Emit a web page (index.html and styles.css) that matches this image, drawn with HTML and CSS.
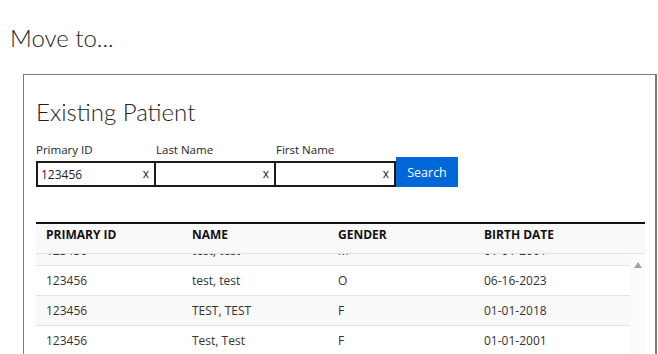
FILE: index.html
```html
<!DOCTYPE html>
<html lang="en">
<head>
  <meta charset="UTF-8" />
  <meta name="viewport" content="width=device-width, initial-scale=1.0"/>
  <title>Move to...</title>
  <link rel="stylesheet" href="styles.css">
</head>
<body>
  <h1 class="page-title">Move to...</h1>
  <div class="panel">
    <h2 class="panel-title">Existing Patient</h2>
    <form class="search" onsubmit="return false">
      <label class="field">
        <span class="field-label">Primary ID</span>
        <span class="field-box">
          <input type="text" value="123456">
          <span class="clear">x</span>
        </span>
      </label>
      <label class="field">
        <span class="field-label">Last Name</span>
        <span class="field-box">
          <input type="text" value="">
          <span class="clear">x</span>
        </span>
      </label>
      <label class="field">
        <span class="field-label">First Name</span>
        <span class="field-box">
          <input type="text" value="">
          <span class="clear">x</span>
        </span>
      </label>
      <button class="search-btn" type="submit">Search</button>
    </form>

    <div class="results">
      <div class="row head">
        <div>PRIMARY ID</div>
        <div>NAME</div>
        <div>GENDER</div>
        <div>BIRTH DATE</div>
      </div>
      <div class="body">
        <div class="rows">
          <div class="row alt">
            <div>123456</div><div>test, test</div><div>M</div><div>01-01-2001</div>
          </div>
          <div class="row">
            <div>123456</div><div>test, test</div><div>O</div><div>06-16-2023</div>
          </div>
          <div class="row alt">
            <div>123456</div><div>TEST, TEST</div><div>F</div><div>01-01-2018</div>
          </div>
          <div class="row">
            <div>123456</div><div>Test, Test</div><div>F</div><div>01-01-2001</div>
          </div>
        </div>
        <div class="scrollbar"><span class="arrow"></span></div>
      </div>
    </div>
  </div>
</body>
</html>
```

FILE: styles.css
```css
body {
  margin: 0;
  height: 100vh;
  overflow: hidden;
  font-family: "Open Sans", "Noto Sans", sans-serif;
  color: #1e1e1e;
  background-color: #fff;
}
.page-title {
  margin: 22px 0 20px 10px;
  font-family: Lato, "Open Sans", sans-serif;
  font-size: 24px;
  font-weight: 300;
  line-height: 32px;
}
.panel {
  margin: 0 1px 0 23px;
  padding: 21px 10px 0 12px;
  border: 1px solid #7a7a7a;
  border-right-width: 2px;
  height: 400px;
}
.panel-title {
  margin: 0 0 14px;
  font-family: Lato, "Open Sans", sans-serif;
  font-size: 24px;
  font-weight: 300;
  line-height: 32px;
}
.search {
  display: flex;
  align-items: flex-end;
}
.field {
  display: flex;
  flex-direction: column;
}
.field-label {
  font-size: 11.5px;
  line-height: 16px;
  margin-bottom: 3px;
}
.field-box {
  display: flex;
  align-items: center;
  width: 116px;
  height: 22px;
  border: 2px solid #1a1a1a;
  border-left: 0;
}
.field:first-child .field-box {
  width: 116px;
  border-left: 2px solid #1a1a1a;
}
.field + .field .field-box {
  width: 118px;
}
.field input {
  flex: 1;
  min-width: 0;
  border: 0;
  outline: 0;
  padding: 0 0 0 3px;
  font-family: inherit;
  font-size: 12px;
  color: #1e1e1e;
  background: transparent;
}
.clear {
  font-size: 12px;
  margin-right: 5px;
  line-height: 1;
}
.search-btn {
  width: 62px;
  height: 30px;
  border: 0;
  background-color: #0067d7;
  color: #fff;
  font-family: inherit;
  font-size: 12.5px;
  cursor: pointer;
}
.results {
  margin-top: 35px;
  border-top: 2px solid #111;
  font-size: 12px;
}
.row {
  display: grid;
  grid-template-columns: 146px 146px 146px 146px;
  height: 29px;
  align-items: center;
  border-bottom: 1px solid #e2e2e2;
  color: #333;
}
.row > div {
  padding-left: 10px;
}
.row.alt {
  background-color: #f9f9f9;
}
.row.head {
  align-items: start;
  padding-top: 3px;
  height: 26px;
  background-color: #f9f9f9;
  font-weight: 700;
  color: #111;
  line-height: 16px;
}
.body {
  display: flex;
  height: 140px;
  overflow: hidden;
}
.rows {
  flex: 1;
  margin-top: -18px;
}
.scrollbar {
  width: 15px;
  background-color: #fbfbfb;
  display: flex;
  justify-content: center;
  padding-top: 8px;
}
.arrow {
  width: 0;
  height: 0;
  border-left: 4.5px solid transparent;
  border-right: 4.5px solid transparent;
  border-bottom: 6px solid #a3a3a3;
}
```
